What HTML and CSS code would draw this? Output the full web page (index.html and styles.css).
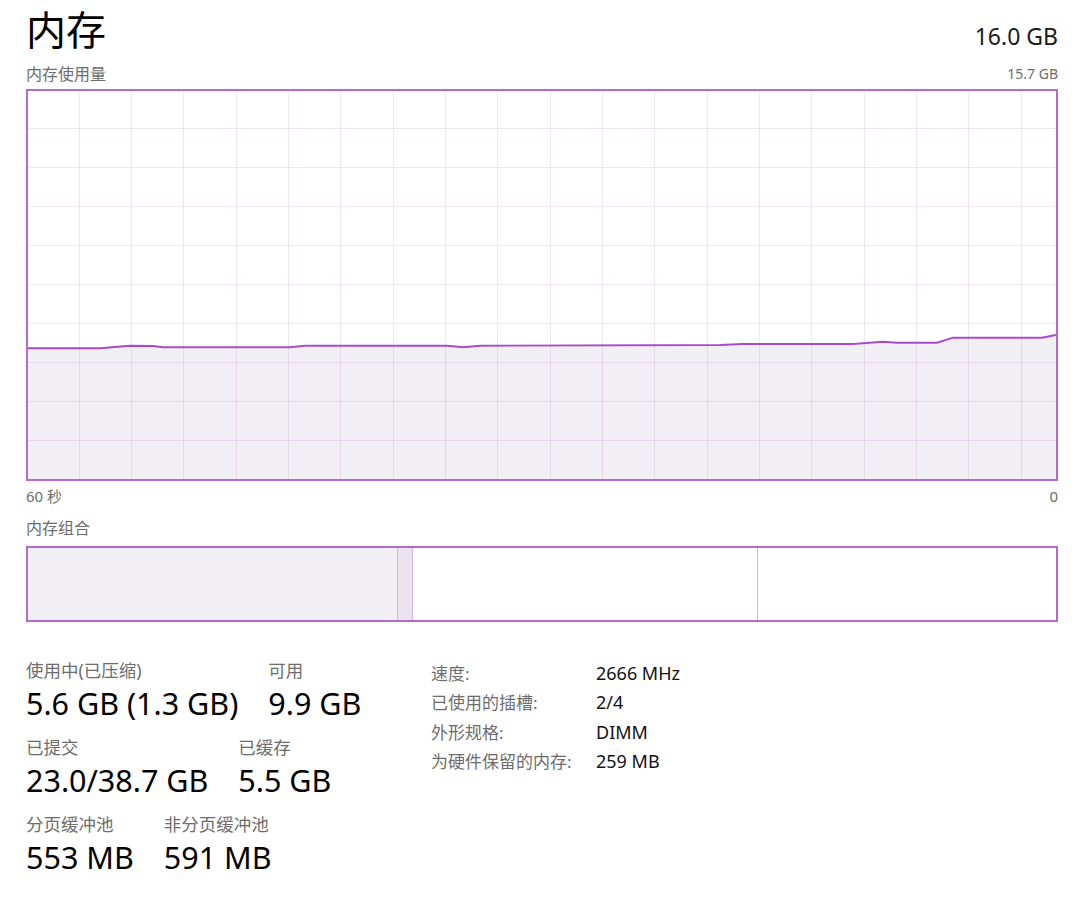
FILE: index.html
```html
<!DOCTYPE html>
<html lang="zh-CN">
<head>
  <meta charset="UTF-8">
  <title>内存</title>
  <link rel="stylesheet" href="styles.css">
</head>
<body>

<header class="head">
  <h1>内存</h1>
  <span class="total">16.0 GB</span>
</header>

<div class="caption">
  <span>内存使用量</span>
  <span class="num">15.7 GB</span>
</div>

<!-- 60 秒历史曲线 -->
<div class="graph">
  <svg width="1028" height="388" viewBox="0 0 1028 388">
    <polygon class="area" points="0,257.3 72,257.3 102,254.7 125,255 135,256.3 262,256.3 277,254.7 419,254.7 435,256.3 452,254.7 692,254 715,253 825,253 855,250.7 869,251.7 909,251.7 925,246.7 1014,246.7 1028,244 1028,388 0,388"/>
    <path class="grid" d="M51.5 0V388M103.5 0V388M155.5 0V388M208.5 0V388M260.5 0V388M312.5 0V388M365.5 0V388M417.5 0V388M469.5 0V388M522.5 0V388M574.5 0V388M626.5 0V388M679.5 0V388M731.5 0V388M783.5 0V388M836.5 0V388M888.5 0V388M940.5 0V388M993.5 0V388M0 37.5H1028M0 76.5H1028M0 115.5H1028M0 154.5H1028M0 193.5H1028M0 232.5H1028M0 271.5H1028M0 310.5H1028M0 349.5H1028"/>
    <polyline class="line" points="0,257.3 72,257.3 102,254.7 125,255 135,256.3 262,256.3 277,254.7 419,254.7 435,256.3 452,254.7 692,254 715,253 825,253 855,250.7 869,251.7 909,251.7 925,246.7 1014,246.7 1028,244"/>
  </svg>
</div>

<div class="axis">
  <span>60 秒</span>
  <span>0</span>
</div>

<div class="caption mix-title">内存组合</div>

<div class="mix">
  <div class="seg used"></div>
  <div class="seg modified"></div>
  <div class="seg standby"></div>
  <div class="seg free"></div>
</div>

<section class="stats">
  <div class="left">
    <div class="row">
      <div class="item"><p class="label">使用中(已压缩)</p><p class="value">5.6 GB (1.3 GB)</p></div>
      <div class="item"><p class="label">可用</p><p class="value">9.9 GB</p></div>
    </div>
    <div class="row">
      <div class="item"><p class="label">已提交</p><p class="value">23.0/38.7 GB</p></div>
      <div class="item"><p class="label">已缓存</p><p class="value">5.5 GB</p></div>
    </div>
    <div class="row">
      <div class="item"><p class="label">分页缓冲池</p><p class="value">553 MB</p></div>
      <div class="item"><p class="label">非分页缓冲池</p><p class="value">591 MB</p></div>
    </div>
  </div>

  <dl class="specs">
    <dt>速度:</dt><dd>2666 MHz</dd>
    <dt>已使用的插槽:</dt><dd>2/4</dd>
    <dt>外形规格:</dt><dd>DIMM</dd>
    <dt>为硬件保留的内存:</dt><dd>259 MB</dd>
  </dl>
</section>

</body>
</html>
```

FILE: styles.css
```css
body {
  margin: 0;
  padding: 8px 22px 0 26px;
  background: #fff;
  color: #000;
  font-family: "Noto Sans", "Noto Sans CJK SC", sans-serif;
}
p, dl, dt, dd, h1 { margin: 0; }

.head {
  display: flex;
  justify-content: space-between;
  align-items: flex-end;
}
.head h1 {
  font-family: "Noto Sans CJK SC", sans-serif;
  font-weight: 400;
  font-size: 40px;
  line-height: 40px;
}
.total {
  font-size: 23px;
  line-height: 23px;
  color: #1a1a1a;
}

.caption {
  display: flex;
  justify-content: space-between;
  margin-top: 18px;
  font-size: 16px;
  line-height: 16px;
  color: #6d6d6d;
}
.caption .num { font-size: 14px; }

.graph {
  margin-top: 7px;
  width: 1028px;
  height: 388px;
  border: 2px solid #b46ad0;
}
.graph svg { display: block; }
.area { fill: #f2eff4; }
.grid {
  stroke: #a85cc8;
  stroke-opacity: 0.16;
  stroke-width: 1;
  fill: none;
}
.line {
  fill: none;
  stroke: #a54cc8;
  stroke-width: 1.9;
}

.axis {
  display: flex;
  justify-content: space-between;
  margin-top: 7px;
  font-size: 15px;
  line-height: 16px;
  color: #6d6d6d;
}

.mix-title { margin-top: 16px; }

.mix {
  display: flex;
  margin-top: 10px;
  height: 72px;
  width: 1028px;
  border: 2px solid #b46ad0;
}
.seg { border-right: 1px solid #d7b2e4; }
.used { width: 369px; background: #f2eff4; }
.modified { width: 14px; background: #ece3f0; }
.standby { width: 344px; }
.free { flex: 1; border-right: none; }

.stats {
  display: grid;
  grid-template-columns: 405px auto;
  align-items: start;
  margin-top: 38px;
}
.left {
  display: flex;
  flex-direction: column;
  gap: 17px;
}
.row {
  display: flex;
  gap: 30px;
}
.label {
  font-size: 17.5px;
  line-height: 20px;
  color: #6d6d6d;
}
.value {
  margin-top: 6px;
  font-size: 30.5px;
  line-height: 34px;
}

.specs {
  display: grid;
  grid-template-columns: 165px auto;
  align-content: start;
  margin-top: -1px;
  font-size: 17px;
  line-height: 29.3px;
}
.specs dt { color: #6d6d6d; }
.specs dd { color: #111; font-size: 18px; }
```
